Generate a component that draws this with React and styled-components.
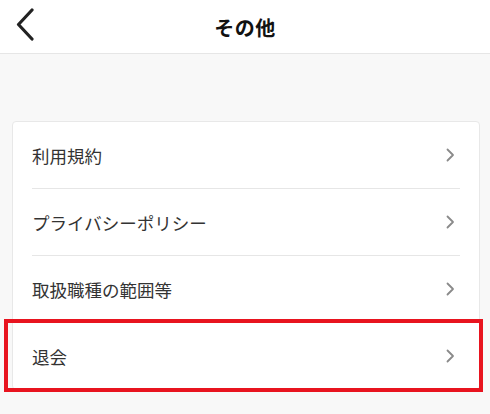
import React from "react";
import styled, { createGlobalStyle } from "styled-components";

const GlobalStyle = createGlobalStyle`
  html, body {
    margin: 0;
    padding: 0;
    background: #f8f8f8;
    font-family: "Noto Sans CJK JP", "Noto Sans", sans-serif;
    color: #333;
  }
`;

const menuItems = [
  { label: "利用規約" },
  { label: "プライバシーポリシー" },
  { label: "取扱職種の範囲等" },
  { label: "退会", highlight: true },
];

const ChevronRight = () => (
  <svg width="10" height="14" viewBox="0 0 10 14">
    <polyline
      points="2.5,1.5 8,7 2.5,12.5"
      fill="none"
      stroke="#8a8a8a"
      strokeWidth="1.8"
      strokeLinecap="round"
      strokeLinejoin="round"
    />
  </svg>
);

const MenuRow = ({ label, highlight, last }) => (
  <Row last={last}>
    <RowLabel>{label}</RowLabel>
    <ChevronRight />
    {highlight && <Highlight />}
  </Row>
);

const App = () => {
  return (
    <>
      <GlobalStyle />
      <Page>
        <Header>
          <BackButton aria-label="戻る">
            <svg width="22" height="34" viewBox="0 0 22 34">
              <polyline
                points="17,2 3.5,16.5 17,31"
                fill="none"
                stroke="#222"
                strokeWidth="3.2"
                strokeLinecap="round"
                strokeLinejoin="round"
              />
            </svg>
          </BackButton>
          <Title>その他</Title>
        </Header>
        <Body>
          <Card>
            {menuItems.map((item, i) => (
              <MenuRow
                key={item.label}
                label={item.label}
                highlight={item.highlight}
                last={i === menuItems.length - 1}
              />
            ))}
          </Card>
        </Body>
      </Page>
    </>
  );
};

const Page = styled.div`
  width: 490px;
  min-height: 414px;
  background: #f8f8f8;
`;

const Header = styled.header`
  height: 53px;
  background: #fff;
  border-bottom: 1px solid #e6e6e6;
  display: flex;
  align-items: center;
  justify-content: center;
  position: relative;
`;

const BackButton = styled.button`
  position: absolute;
  left: 15px;
  top: 8px;
  border: none;
  background: none;
  padding: 0;
  display: flex;
  cursor: pointer;
`;

const Title = styled.h1`
  margin: 0;
  font-size: 20px;
  font-weight: 700;
  color: #111;
  letter-spacing: 0.5px;
  padding-top: 2px;
`;

const Body = styled.main`
  padding: 67px 10px 0 12px;
`;

const Card = styled.div`
  background: #fff;
  border: 1px solid #e8e8e8;
  border-radius: 4px;
  padding: 0 19px;
`;

const Row = styled.div`
  position: relative;
  height: 66px;
  display: flex;
  align-items: center;
  justify-content: space-between;
  padding-right: 5px;
  border-bottom: ${({ last }) => (last ? "none" : "1px solid #e6e6e6")};
`;

const RowLabel = styled.span`
  font-size: 17.5px;
  color: #333;
`;

const Highlight = styled.div`
  position: absolute;
  top: -4px;
  left: -28px;
  right: -23px;
  bottom: -3px;
  border: 4px solid #e8141f;
  pointer-events: none;
`;

export default App;
